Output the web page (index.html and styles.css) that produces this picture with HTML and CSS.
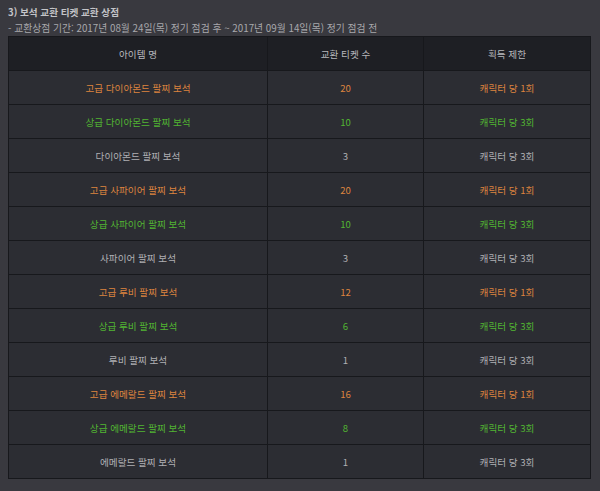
FILE: index.html
```html
<!DOCTYPE html>
<html lang="ko">
<head>
<meta charset="utf-8">
<link rel="stylesheet" href="styles.css">
</head>
<body>
<div class="page">
  <h3 class="title">3) 보석 교환 티켓 교환 상점</h3>
  <p class="period">- 교환상점 기간: 2017년 08월 24일(목) 정기 점검 후 ~ 2017년 09월 14일(목) 정기 점검 전</p>
  <table class="shop">
    <colgroup><col class="c1"><col class="c2"><col class="c3"></colgroup>
    <thead>
      <tr><th>아이템 명</th><th>교환 티켓 수</th><th>획득 제한</th></tr>
    </thead>
    <tbody>
      <tr class="orange"><td>고급 다이아몬드 팔찌 보석</td><td>20</td><td>캐릭터 당 1회</td></tr>
      <tr class="green"><td>상급 다이아몬드 팔찌 보석</td><td>10</td><td>캐릭터 당 3회</td></tr>
      <tr><td>다이아몬드 팔찌 보석</td><td>3</td><td>캐릭터 당 3회</td></tr>
      <tr class="orange"><td>고급 사파이어 팔찌 보석</td><td>20</td><td>캐릭터 당 1회</td></tr>
      <tr class="green"><td>상급 사파이어 팔찌 보석</td><td>10</td><td>캐릭터 당 3회</td></tr>
      <tr><td>사파이어 팔찌 보석</td><td>3</td><td>캐릭터 당 3회</td></tr>
      <tr class="orange"><td>고급 루비 팔찌 보석</td><td>12</td><td>캐릭터 당 1회</td></tr>
      <tr class="green"><td>상급 루비 팔찌 보석</td><td>6</td><td>캐릭터 당 3회</td></tr>
      <tr><td>루비 팔찌 보석</td><td>1</td><td>캐릭터 당 3회</td></tr>
      <tr class="orange"><td>고급 에메랄드 팔찌 보석</td><td>16</td><td>캐릭터 당 1회</td></tr>
      <tr class="green"><td>상급 에메랄드 팔찌 보석</td><td>8</td><td>캐릭터 당 3회</td></tr>
      <tr><td>에메랄드 팔찌 보석</td><td>1</td><td>캐릭터 당 3회</td></tr>
    </tbody>
  </table>
</div>
</body>
</html>
```

FILE: styles.css
```css
html, body {
  margin: 0;
  padding: 0;
  background: #39393f;
}
body {
  font-family: "Noto Sans CJK KR", "Noto Sans", sans-serif;
  color: #b4b4b8;
}
.page {
  padding: 5px 10px 0 8px;
}
.title {
  margin: 0;
  font-size: 9.6px;
  font-weight: bold;
  line-height: 14px;
  color: #c4c4c8;
}
.period {
  margin: 2px 0 0 0;
  font-size: 9.8px;
  line-height: 14px;
  color: #a8a8ac;
}
.shop {
  margin-top: 1px;
  width: 582px;
  border-collapse: collapse;
  table-layout: fixed;
  border: 1px solid #141519;
}
.c1 { width: 259px; }
.c2 { width: 156px; }
.c3 { width: 167px; }
.shop th, .shop td {
  height: 33px;
  padding: 0;
  text-align: center;
  font-size: 9.6px;
  border: 1px solid #17181c;
}
.shop th {
  background: #1e1f24;
  color: #b8b8bc;
  font-weight: normal;
}
.shop td {
  background: #2c2d33;
  color: #b0b0b4;
}
.shop tr.orange td { color: #dd843f; }
.shop tr.green td { color: #52b532; }
```
